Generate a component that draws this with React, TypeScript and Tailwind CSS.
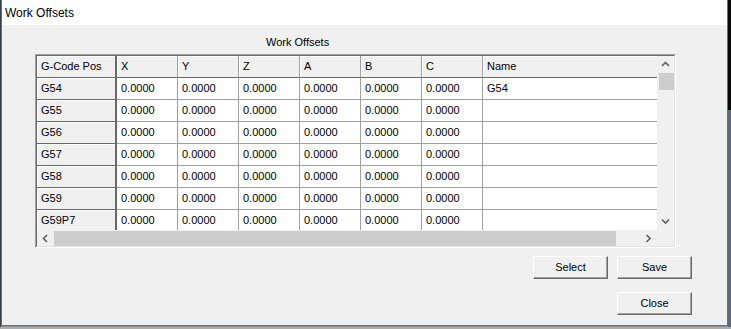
import { ReactNode } from "react";

const cols = ["X", "Y", "Z", "A", "B", "C"];
const rows = ["G54", "G55", "G56", "G57", "G58", "G59", "G59P7"];

function Chevron({ dir }: { dir: "up" | "down" | "left" | "right" }) {
  const d = {
    up: "M1 5 L4.5 1.5 L8 5",
    down: "M1 1.5 L4.5 5 L8 1.5",
    left: "M5 1 L1.5 4.5 L5 8",
    right: "M1.5 1 L5 4.5 L1.5 8",
  }[dir];
  const vertical = dir === "up" || dir === "down";
  return (
    <svg width={vertical ? 9 : 7} height={vertical ? 7 : 9} viewBox={vertical ? "0 0 9 7" : "0 0 7 9"}>
      <path d={d} fill="none" stroke="#606060" strokeWidth="1.6" />
    </svg>
  );
}

function Btn({ children }: { children: ReactNode }) {
  return (
    <div className="w-[75px] h-[23px] flex items-center justify-center bg-[#f0f0f0] border border-t-white border-l-white border-r-[#696969] border-b-[#696969] shadow-[inset_-1px_-1px_0_#a0a0a0] text-[11px] text-black">
      {children}
    </div>
  );
}

export default function App() {
  return (
    <div className="w-[731px] h-[329px] overflow-hidden flex flex-col bg-[#8f9398] font-['Liberation_Sans',Arial,sans-serif]">
      <div className="flex h-[327px] shrink-0">
        <div className="w-[1px] bg-[#3a3f46]" />
        <div className="w-[727px] h-[326px] flex flex-col border-x border-b border-[#1883d7] bg-[#f0f0f0]">
          {/* title bar */}
          <div className="h-[25px] bg-white flex items-center pl-[3px] text-[12px] text-black shrink-0">
            Work Offsets
          </div>

          {/* group label */}
          <div className="h-[29px] pl-[264px] pt-[11px] text-[11px] leading-[13px] text-black">Work Offsets</div>

          {/* grid frame */}
          <div className="ml-[33px] w-[641px] h-[194px] border-t border-l border-t-[#a0a0a0] border-l-[#a0a0a0] border-r border-b border-r-white border-b-white">
            <div className="w-full h-full border-t border-l border-t-[#696969] border-l-[#696969] border-r border-b border-r-[#e3e3e3] border-b-[#e3e3e3] flex flex-col">
              <div className="flex h-[174px]">
                <div className="w-[620px] overflow-hidden bg-white">
                  {/* header */}
                  <div className="flex h-[22px] text-[11px] text-black">
                    <div className="w-[80px] shrink-0 flex items-center pl-[4px] bg-[#f0f0f0] border-r-2 border-r-[#696969] border-b border-b-[#696969] shadow-[inset_1px_1px_0_#fff]">
                      G-Code Pos
                    </div>
                    {cols.map((c) => (
                      <div
                        key={c}
                        className="w-[61px] shrink-0 flex items-center pl-[4px] bg-[#f0f0f0] border-r border-r-[#a0a0a0] border-b border-b-[#696969] shadow-[inset_1px_1px_0_#fff]"
                      >
                        {c}
                      </div>
                    ))}
                    <div className="flex-1 flex items-center pl-[4px] bg-[#f0f0f0] border-b border-b-[#696969] shadow-[inset_1px_1px_0_#fff]">
                      Name
                    </div>
                  </div>
                  {/* rows */}
                  {rows.map((r) => (
                    <div key={r} className="flex h-[22px] text-[11px] text-black">
                      <div className="w-[80px] shrink-0 flex items-center pl-[4px] bg-[#f0f0f0] border-r-2 border-r-[#696969] border-b border-b-[#696969] shadow-[inset_1px_1px_0_#fff]">
                        {r}
                      </div>
                      {cols.map((c) => (
                        <div
                          key={c}
                          className="w-[61px] shrink-0 flex items-center pl-[4px] border-r border-b border-[#a0a0a0]"
                        >
                          0.0000
                        </div>
                      ))}
                      <div className="flex-1 flex items-center pl-[4px] border-b border-[#a0a0a0]">
                        {r === "G54" ? "G54" : ""}
                      </div>
                    </div>
                  ))}
                </div>
                {/* vertical scrollbar */}
                <div className="flex-1 flex flex-col bg-[#f0f0f0]">
                  <div className="h-[17px] flex items-center justify-center">
                    <Chevron dir="up" />
                  </div>
                  <div className="ml-[2px] w-[15px] h-[17px] bg-[#cdcdcd]" />
                  <div className="flex-1" />
                  <div className="h-[17px] flex items-center justify-center">
                    <Chevron dir="down" />
                  </div>
                </div>
              </div>
              {/* horizontal scrollbar */}
              <div className="flex flex-1 bg-[#f0f0f0]">
                <div className="w-[17px] flex items-center justify-center">
                  <Chevron dir="left" />
                </div>
                <div className="w-[562px] mt-[1px] h-[15px] bg-[#cdcdcd]" />
                <div className="w-[41px] flex items-center justify-end pr-[5px]">
                  <Chevron dir="right" />
                </div>
                <div className="flex-1" />
              </div>
            </div>
          </div>

          {/* buttons */}
          <div className="flex justify-end gap-[9px] pr-[35px] mt-[8px]">
            <Btn>Select</Btn>
            <Btn>Save</Btn>
          </div>
          <div className="flex justify-end pr-[35px] mt-[13px]">
            <Btn>Close</Btn>
          </div>
        </div>
        <div className="flex-1 flex flex-col">
          <div className="h-[110px] bg-[#0a0a0a]" />
          <div className="flex-1 bg-[#5d6a78]" />
        </div>
      </div>
      <div className="flex-1 bg-[#a9abad]" />
    </div>
  );
}
